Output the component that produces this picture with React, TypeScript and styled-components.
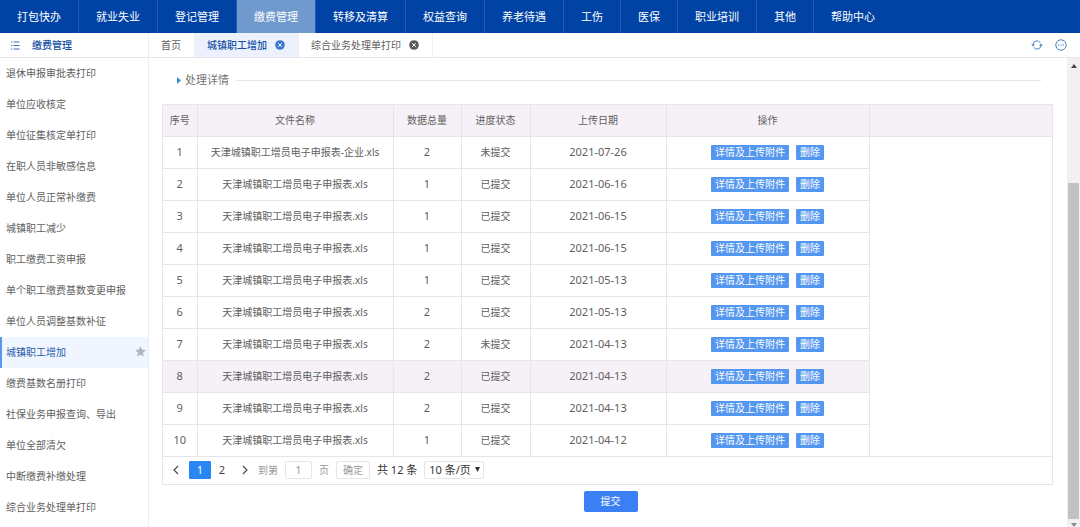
import React, { useState } from 'react';
import styled, { createGlobalStyle } from 'styled-components';

const GlobalStyle = createGlobalStyle`
  *, *::before, *::after { box-sizing: border-box; }
  body {
    margin: 0;
    background: #fff;
    color: #606060;
    font-family: "Noto Sans", "Noto Sans CJK SC", sans-serif;
    font-size: 10px;
    line-height: 16px;
  }
  button, input, select { font: inherit; color: inherit; margin: 0; }
  button { cursor: pointer; }
  a { color: inherit; text-decoration: none; }
`;

const Page = styled.div`
  display: flex;
  flex-direction: column;
  min-height: 100vh;
`;

const TopNav = styled.nav`
  display: flex;
  height: 33px;
  background: #0043a4;
`;

const NavLink = styled.a<{ $active?: boolean }>`
  display: flex;
  align-items: center;
  padding: 0 17px;
  border-right: 1px solid #1f5bb2;
  background: ${p => (p.$active ? '#7099cd' : 'transparent')};
  color: #fff;
  font-size: 11px;
  white-space: nowrap;
  &:last-child { border-right: 0; }
`;

const Body = styled.div`
  display: flex;
  flex: 1;
`;

const Sidebar = styled.aside`
  flex: none;
  width: 149px;
  border-right: 1px solid #ececf2;
`;

const SideHead = styled.h2`
  display: flex;
  align-items: center;
  gap: 12px;
  height: 25px;
  margin: 0;
  padding: 0 11px;
  border-bottom: 1px solid #e6e6ea;
  color: #1450a4;
  font-size: 10px;
  font-weight: 500;
`;

const SideLink = styled.a<{ $active?: boolean }>`
  display: flex;
  align-items: center;
  justify-content: space-between;
  height: 31px;
  padding: 0 2px 2px 4px;
  border-left: 2px solid ${p => (p.$active ? '#5b96ee' : 'transparent')};
  background: ${p => (p.$active ? '#f0f6ff' : 'transparent')};
  color: ${p => (p.$active ? '#2a5ba8' : 'inherit')};
`;

const Main = styled.main`
  display: flex;
  flex-direction: column;
  flex: 1;
  min-width: 0;
`;

const TabBar = styled.div`
  display: flex;
  height: 25px;
  border-bottom: 1px solid #e6e6ea;
`;

const Tab = styled.div<{ $active?: boolean }>`
  display: flex;
  align-items: center;
  gap: 8px;
  padding: 0 13px 0 12px;
  border-right: 1px solid #efeff4;
  background: ${p => (p.$active ? '#edf1fd' : 'transparent')};
  color: ${p => (p.$active ? '#1450a4' : 'inherit')};
  font-weight: ${p => (p.$active ? 500 : 400)};
`;

const IconButton = styled.button`
  display: flex;
  padding: 0;
  border: 0;
  background: none;
`;

const TabTools = styled.div`
  display: flex;
  align-items: center;
  gap: 12px;
  margin-left: auto;
  padding-right: 13px;
`;

const Viewport = styled.div`
  display: flex;
  flex: 1;
`;

const Content = styled.div`
  flex: 1;
  min-width: 0;
  padding: 13px 14px 0 13px;
`;

const SectionTitle = styled.h3`
  display: flex;
  align-items: center;
  gap: 4px;
  height: 18px;
  margin: 0 12px 15px 15px;
  color: #757575;
  font-size: 11px;
  font-weight: 400;
  &::after {
    content: "";
    flex: 1;
    height: 1px;
    margin-left: 3px;
    background: #e6e6e6;
  }
`;

const Panel = styled.section`
  border: 1px solid #e6e6ea;
`;

const Table = styled.table`
  width: 100%;
  border-collapse: collapse;
  table-layout: fixed;
  text-align: center;
`;

const HeadCell = styled.th<{ $width?: number }>`
  width: ${p => (p.$width ? `${p.$width}px` : 'auto')};
  height: 31px;
  padding: 0 0 1px;
  border-right: 1px solid #e6e4ea;
  border-bottom: 1px solid #e6e4ea;
  background: #f5f1f6;
  font-weight: 400;
  &:last-child { border-right: 0; }
`;

const Row = styled.tr<{ $hover?: boolean }>`
  background: ${p => (p.$hover ? '#f5f1f6' : '#fff')};
`;

const Cell = styled.td<{ $numeric?: boolean }>`
  height: 32px;
  padding: 0;
  border-right: 1px solid #e6e6ea;
  border-bottom: 1px solid #e6e6ea;
  font-size: ${p => (p.$numeric ? '11px' : '10px')};
  white-space: nowrap;
`;

const FillCell = styled.td`
  padding: 0;
  border-bottom: 1px solid #e6e6ea;
  background: #fff;
`;

const Actions = styled.div`
  display: flex;
  justify-content: center;
  gap: 7px;
  padding-top: 1px;
`;

const ActionButton = styled.button`
  height: 15px;
  padding: 0 4px;
  border: 0;
  border-radius: 1px;
  background: #5497f0;
  color: #fff;
  line-height: 15px;
`;

const Pager = styled.div`
  display: flex;
  align-items: center;
  height: 27px;
  padding: 0 10px 1px;
  color: #333;
  font-size: 11px;
`;

const PageList = styled.div`
  display: flex;
  margin: 0 9px 0 10px;
`;

const PageButton = styled.button<{ $current?: boolean }>`
  width: 22px;
  height: 18px;
  padding: 0;
  border: 0;
  border-radius: 1px;
  background: ${p => (p.$current ? '#2a86f2' : 'transparent')};
  color: ${p => (p.$current ? '#fff' : '#444')};
`;

const JumpLabel = styled.label`
  display: flex;
  align-items: center;
  gap: 7px;
  margin-left: 10px;
  color: #999;
  font-size: 10px;
`;

const JumpInput = styled.input`
  width: 27px;
  height: 18px;
  padding: 0;
  border: 1px solid #e6e6e6;
  border-radius: 2px;
  background: #fff;
  font-size: 11px;
  text-align: center;
`;

const JumpButton = styled.button`
  height: 18px;
  margin: 0 7px;
  padding: 0 6px;
  border: 1px solid #e6e6e6;
  border-radius: 2px;
  background: #fff;
  color: #999;
  font-size: 10px;
  line-height: 16px;
`;

const SizePicker = styled.div`
  position: relative;
  margin-left: 7px;
  svg {
    position: absolute;
    top: 6px;
    right: 4px;
    pointer-events: none;
  }
`;

const SizeSelect = styled.select`
  appearance: none;
  display: block;
  width: 60px;
  height: 18px;
  padding: 0 0 0 4px;
  border: 1px solid #e6e6e6;
  border-radius: 2px;
  background: #fff;
`;

const SubmitRow = styled.div`
  display: flex;
  justify-content: center;
  padding: 6px 0 14px 6px;
`;

const SubmitButton = styled.button`
  width: 54px;
  height: 21px;
  padding: 0;
  border: 0;
  border-radius: 2px;
  background: #3a80f4;
  color: #fff;
`;

const ScrollTrack = styled.div`
  display: flex;
  flex-direction: column;
  align-items: center;
  flex: none;
  width: 13px;
  padding: 6px 0 0;
  background: #f3f0f5;
`;

const ScrollThumb = styled.div`
  flex: 336;
  width: 11px;
  margin-bottom: 4px;
  background: #c2c1c4;
`;

const ScrollGap = styled.div`
  flex: 115;
`;

const navItems = [
  '打包快办', '就业失业', '登记管理', '缴费管理', '转移及清算', '权益查询',
  '养老待遇', '工伤', '医保', '职业培训', '其他', '帮助中心',
];

const sideItems = [
  '退休申报审批表打印', '单位应收核定', '单位征集核定单打印', '在职人员非敏感信息',
  '单位人员正常补缴费', '城镇职工减少', '职工缴费工资申报', '单个职工缴费基数变更申报',
  '单位人员调整基数补征', '城镇职工增加', '缴费基数名册打印', '社保业务申报查询、导出',
  '单位全部清欠', '中断缴费补缴处理', '综合业务处理单打印',
];

const columns: { title: string; width?: number }[] = [
  { title: '序号', width: 34 },
  { title: '文件名称', width: 196 },
  { title: '数据总量', width: 68 },
  { title: '进度状态', width: 69 },
  { title: '上传日期', width: 136 },
  { title: '操作', width: 203 },
  { title: '' },
];

const plainFile = '天津城镇职工增员电子申报表.xls';

const rows = [
  { file: '天津城镇职工增员电子申报表-企业.xls', total: 2, status: '未提交', date: '2021-07-26' },
  { file: plainFile, total: 1, status: '已提交', date: '2021-06-16' },
  { file: plainFile, total: 1, status: '已提交', date: '2021-06-15' },
  { file: plainFile, total: 1, status: '已提交', date: '2021-06-15' },
  { file: plainFile, total: 1, status: '已提交', date: '2021-05-13' },
  { file: plainFile, total: 2, status: '已提交', date: '2021-05-13' },
  { file: plainFile, total: 2, status: '未提交', date: '2021-04-13' },
  { file: plainFile, total: 2, status: '已提交', date: '2021-04-13' },
  { file: plainFile, total: 2, status: '已提交', date: '2021-04-13' },
  { file: plainFile, total: 1, status: '已提交', date: '2021-04-12' },
];

const ListIcon = () => (
  <svg width="9" height="9" viewBox="0 0 9 9" stroke="#3f6fb5" fill="none" aria-hidden="true">
    <path d="M0 1h1.3M0 4.5h1.3M0 8h1.3M2.6 1H8.5M2.6 4.5H8.5M2.6 8H8.5" />
  </svg>
);

const StarIcon = () => (
  <svg width="11" height="11" viewBox="0 0 11 11" fill="#b3b6be" aria-hidden="true">
    <path d="M5.5.3 7.1 3.6l3.7.5L8.1 6.7l.7 3.8-3.3-1.8-3.3 1.8.7-3.8L.2 4.1l3.7-.5z" />
  </svg>
);

const CloseIcon = ({ color }: { color: string }) => (
  <svg width="10" height="10" viewBox="0 0 10 10" aria-hidden="true">
    <circle cx="5" cy="5" r="4.8" fill={color} />
    <path d="M3.2 3.2l3.6 3.6M6.8 3.2L3.2 6.8" stroke="#fff" strokeWidth="1" />
  </svg>
);

const RefreshIcon = () => (
  <svg width="12" height="12" viewBox="0 0 12 12" fill="none" stroke="#4a7fc4" aria-hidden="true">
    <path d="M2 5.6A4 4 0 0 1 9.4 3.8M10 6.4A4 4 0 0 1 2.6 8.2" />
    <path d="M.2 5.2h3.6L2 7.4zM8.2 6.8h3.6L10 4.6z" fill="#4a7fc4" stroke="none" />
  </svg>
);

const MoreIcon = () => (
  <svg width="12" height="12" viewBox="0 0 12 12" fill="none" stroke="#4a7fc4" aria-hidden="true">
    <circle cx="6" cy="6" r="5.2" />
    <path d="M3 6h1.2M5.4 6h1.2M7.8 6H9" strokeWidth="1.2" />
  </svg>
);

const Chevron = ({ d }: { d: string }) => (
  <svg width="6" height="10" viewBox="0 0 6 10" fill="none" stroke="#444" strokeWidth="1.1" aria-hidden="true">
    <path d={d} />
  </svg>
);

const Triangle = ({ d, color, width, height }: { d: string; color: string; width: number; height: number }) => (
  <svg width={width} height={height} viewBox={`0 0 ${width} ${height}`} fill={color} aria-hidden="true">
    <path d={d} />
  </svg>
);

export default function App() {
  const [jump, setJump] = useState('1');
  return (
    <Page>
      <GlobalStyle />
      <TopNav>
        {navItems.map(item => (
          <NavLink key={item} href="#" $active={item === '缴费管理'}>{item}</NavLink>
        ))}
      </TopNav>
      <Body>
        <Sidebar>
          <SideHead><ListIcon />缴费管理</SideHead>
          <nav>
            {sideItems.map(item => {
              const active = item === '城镇职工增加';
              return (
                <SideLink key={item} href="#" $active={active}>
                  {item}
                  {active && <StarIcon />}
                </SideLink>
              );
            })}
          </nav>
        </Sidebar>
        <Main>
          <TabBar>
            <Tab><a href="#">首页</a></Tab>
            <Tab $active>
              <a href="#">城镇职工增加</a>
              <IconButton aria-label="关闭"><CloseIcon color="#3a78d0" /></IconButton>
            </Tab>
            <Tab>
              <a href="#">综合业务处理单打印</a>
              <IconButton aria-label="关闭"><CloseIcon color="#5a5a5a" /></IconButton>
            </Tab>
            <TabTools>
              <IconButton aria-label="刷新"><RefreshIcon /></IconButton>
              <IconButton aria-label="更多"><MoreIcon /></IconButton>
            </TabTools>
          </TabBar>
          <Viewport>
            <Content>
              <SectionTitle>
                <Triangle d="M0 0l4 3.5L0 7z" color="#3a8ed0" width={4} height={7} />
                处理详情
              </SectionTitle>
              <Panel>
                <Table>
                  <thead>
                    <tr>
                      {columns.map(c => (
                        <HeadCell key={c.title} $width={c.width}>{c.title}</HeadCell>
                      ))}
                    </tr>
                  </thead>
                  <tbody>
                    {rows.map((row, i) => (
                      <Row key={i} $hover={i === 7}>
                        <Cell $numeric>{i + 1}</Cell>
                        <Cell>{row.file}</Cell>
                        <Cell $numeric>{row.total}</Cell>
                        <Cell>{row.status}</Cell>
                        <Cell $numeric>{row.date}</Cell>
                        <Cell>
                          <Actions>
                            <ActionButton>详情及上传附件</ActionButton>
                            <ActionButton>删除</ActionButton>
                          </Actions>
                        </Cell>
                        {i === 0 && <FillCell rowSpan={rows.length} />}
                      </Row>
                    ))}
                  </tbody>
                </Table>
                <Pager>
                  <IconButton aria-label="上一页"><Chevron d="M5 1L1 5l4 4" /></IconButton>
                  <PageList>
                    <PageButton $current>1</PageButton>
                    <PageButton>2</PageButton>
                  </PageList>
                  <IconButton aria-label="下一页"><Chevron d="M1 1l4 4-4 4" /></IconButton>
                  <JumpLabel>
                    到第
                    <JumpInput value={jump} onChange={e => setJump(e.target.value)} />
                    页
                  </JumpLabel>
                  <JumpButton>确定</JumpButton>
                  <span>共 12 条</span>
                  <SizePicker>
                    <SizeSelect aria-label="每页条数" defaultValue="10">
                      <option value="10">10 条/页</option>
                      <option value="20">20 条/页</option>
                    </SizeSelect>
                    <Triangle d="M0 0h5L2.5 5z" color="#333" width={5} height={5} />
                  </SizePicker>
                </Pager>
              </Panel>
              <SubmitRow>
                <SubmitButton>提交</SubmitButton>
              </SubmitRow>
            </Content>
            <ScrollTrack aria-hidden="true">
              <Triangle d="M0 4h6L3 0z" color="#4a4a4a" width={6} height={4} />
              <ScrollGap />
              <ScrollThumb />
              <Triangle d="M0 0h6L3 4z" color="#8a8a8a" width={6} height={4} />
            </ScrollTrack>
          </Viewport>
        </Main>
      </Body>
    </Page>
  );
}
